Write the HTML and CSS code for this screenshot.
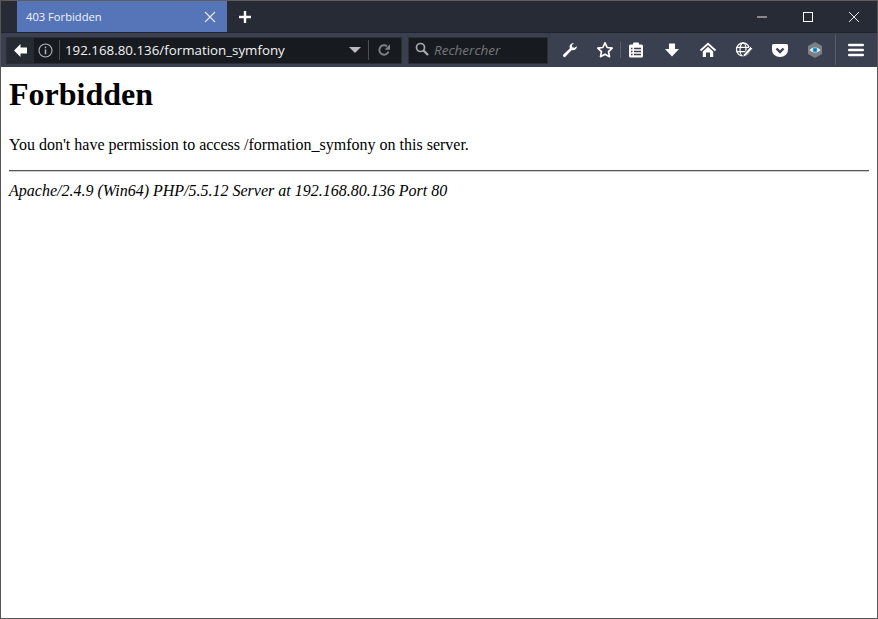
FILE: index.html
```html
<!DOCTYPE html>
<html lang="en">
<head>
  <meta charset="UTF-8" />
  <title>403 Forbidden</title>
  <link rel="stylesheet" href="styles.css">
</head>
<body>
  <div class="window">
    <div class="tabbar">
      <div class="tab">
        <span class="tab-title">403 Forbidden</span>
        <svg class="tab-close" width="12" height="12" viewBox="0 0 12 12"><path d="M1 1l10 10M11 1L1 11" stroke="#e6eaf2" stroke-width="1.1" fill="none"/></svg>
      </div>
      <svg class="new-tab" width="14" height="14" viewBox="0 0 14 14"><path d="M7 1v12M1 7h12" stroke="#fff" stroke-width="2.4" fill="none"/></svg>
      <div class="win-controls">
        <svg width="12" height="12" viewBox="0 0 12 12"><path d="M1 6h10" stroke="#e8e8e8" stroke-width="1" fill="none"/></svg>
        <svg width="12" height="12" viewBox="0 0 12 12"><rect x="1.5" y="1.5" width="9" height="9" stroke="#fff" fill="none"/></svg>
        <svg width="12" height="12" viewBox="0 0 12 12"><path d="M1 1l10 10M11 1L1 11" stroke="#e8e8e8" stroke-width="1" fill="none"/></svg>
      </div>
    </div>

    <div class="navbar">
      <div class="urlbar">
        <div class="back">
          <svg width="15" height="15" viewBox="0 0 15 15"><path d="M7.500 1L1 7.500 7.500 14V10.500H14v-6H7.500z" fill="#fff"/></svg>
        </div>
        <svg class="info" width="15" height="15" viewBox="0 0 15 15"><circle cx="7.500" cy="7.500" r="6.500" stroke="#b4b7bc" stroke-width="1.100" fill="none"/><path d="M7.500 6.500v4.700M7.500 3.600v1.600" stroke="#b4b7bc" stroke-width="1.500" fill="none"/></svg>
        <span class="sep"></span>
        <span class="url">192.168.80.136/formation_symfony</span>
        <span class="dropmark"></span>
        <span class="sep"></span>
        <svg class="reload" width="14" height="14" viewBox="0 0 14 14"><path d="M11.500 8.500A4.700 4.700 0 1 1 10 3.300" stroke="#7d8084" stroke-width="2" fill="none"/><path d="M7.500 6.800h5.500V1.300z" fill="#7d8084"/></svg>
      </div>
      <div class="searchbar">
        <svg class="search-icon" width="14" height="14" viewBox="0 0 14 14"><circle cx="5.500" cy="5.500" r="4" stroke="#a4a7ab" stroke-width="1.700" fill="none"/><path d="M8.500 8.500l4.500 4.500" stroke="#a4a7ab" stroke-width="2.400" fill="none"/></svg>
        <span class="search-text">Rechercher</span>
      </div>
      <div class="tools">
        <svg class="tool tight" viewBox="-1 -1 18 18"><path d="M15 4.200a4 4 0 0 1-5.300 3.800L3.600 14.600a1.400 1.400 0 0 1-2.200-2L7.800 6.400A4 4 0 0 1 12 1l-2.200 2.300.5 2 2 .5z" fill="#fff"/></svg>
        <svg class="tool flush" viewBox="0 0 18 18"><path d="M9 1.800l2.200 4.700 5 .6-3.700 3.500 1 5.100L9 13.200l-4.500 2.500 1-5.100L1.800 7.100l5-.6z" stroke="#fff" stroke-width="1.700" fill="none" stroke-linejoin="round"/></svg>
        <span class="tool-sep"></span>
        <svg class="tool" viewBox="0 0 18 18"><rect x="2" y="3.500" width="14" height="13" rx="1.500" fill="#fff"/><rect x="6" y="1.500" width="6" height="3" rx="1" fill="#fff"/><path d="M4 7.500h1.500M7 7.500h7M4 10.500h1.500M7 10.500h7M4 13.500h1.500M7 13.500h7" stroke="#3a4050" stroke-width="1.300"/></svg>
        <svg class="tool" viewBox="0 0 18 18"><path d="M6 2.500h6V8h4l-7 7.500L2 8h4z" fill="#fff"/></svg>
        <svg class="tool" viewBox="0 0 18 18"><path d="M1.500 9.500L9 2.800l7.500 6.700" stroke="#fff" stroke-width="1.800" fill="none"/><path d="M3.800 10.500L9 5.800l5.200 4.700V16H11v-4.500H7V16H3.800z" fill="#fff"/></svg>
        <svg class="tool" viewBox="0 0 18 18"><circle cx="8" cy="8.500" r="6.500" stroke="#fff" stroke-width="1.300" fill="none"/><ellipse cx="8" cy="8.500" rx="3" ry="6.500" stroke="#fff" stroke-width="1.200" fill="none"/><path d="M1.500 6.300h13M1.500 10.700h13" stroke="#fff" stroke-width="1.200"/><path d="M15.500 5.500l2.200 2.200-7.200 7.500-3 1.100 1-3z" fill="#fff" stroke="#3a4050" stroke-width="1"/></svg>
        <svg class="tool tight" viewBox="0 0 18 18"><path d="M2.500 3h13A1.500 1.500 0 0 1 17 4.500V9A8 7 0 0 1 1 9V4.500A1.500 1.500 0 0 1 2.500 3z" fill="#fff"/><path d="M5.500 7.500L9 11l3.500-3.500" stroke="#3a4050" stroke-width="2.400" fill="none"/></svg>
        <svg class="tool flush" viewBox="0 0 18 18"><path d="M9 1l7 4v8l-7 4-7-4V5z" fill="#7b7f86"/><path d="M3.300 9Q9 3.500 14.700 9 9 14.500 3.300 9z" fill="#e8edf2"/><circle cx="9" cy="9" r="2.400" fill="#2a9bd6"/><circle cx="9" cy="9" r=".9" fill="#15608a"/></svg>
        <span class="tool-sep tall"></span>
        <svg class="tool flush" viewBox="0 0 18 18"><path d="M2.300 4h13.400M2.300 9h13.400M2.300 14h13.400" stroke="#fff" stroke-width="2.700" stroke-linecap="round"/></svg>
      </div>
    </div>

    <main class="page">
      <h1>Forbidden</h1>
      <p>You don't have permission to access /formation_symfony on this server.</p>
      <hr>
      <address>Apache/2.4.9 (Win64) PHP/5.5.12 Server at 192.168.80.136 Port 80</address>
    </main>
  </div>
</body>
</html>
```

FILE: styles.css
```css
html, body {
  margin: 0;
  padding: 0;
  height: 100%;
  overflow: hidden;
}

.window {
  height: 100%;
  box-sizing: border-box;
  border: 1px solid #555;
  border-top: 1px solid #5c5c58;
  display: flex;
  flex-direction: column;
  background: #fff;
}

.tabbar {
  height: 31px;
  background: #272b35;
  display: flex;
  align-items: center;
  padding-left: 16px;
}

.tab {
  width: 210px;
  height: 31px;
  background: #5675b9;
  display: flex;
  align-items: center;
  justify-content: space-between;
  padding: 0 11px 0 9px;
  box-sizing: border-box;
}

.tab-title {
  font: 11.200px "Open Sans", sans-serif;
  color: #f0f3f8;
}

.new-tab {
  margin-left: 11px;
}

.win-controls {
  margin-left: auto;
  display: flex;
  gap: 34px;
  padding-right: 17px;
}

.navbar {
  height: 34px;
  background: #3a4050;
  border-top: 1px solid #20232b;
  display: flex;
  align-items: center;
  padding-left: 5px;
}

.urlbar {
  width: 396px;
  height: 27px;
  background: #171b1f;
  border: 1px solid #2a2e37;
  box-sizing: border-box;
  display: flex;
  align-items: center;
}

.back {
  width: 27px;
  height: 25px;
  background: #252a33;
  display: flex;
  align-items: center;
  justify-content: center;
}

.info {
  margin-left: 4px;
}

.sep {
  width: 1px;
  height: 20px;
  background: #4b4f57;
  margin-left: 6px;
}

.url {
  font: 13.330px "Open Sans", sans-serif;
  color: #f2f3f4;
  margin-left: 5px;
}

.dropmark {
  margin-left: auto;
  border-left: 6px solid transparent;
  border-right: 6px solid transparent;
  border-top: 6px solid #b8babd;
}

.dropmark + .sep {
  margin-left: 7px;
}

.reload {
  margin: 0 10px 0 8px;
}

.searchbar {
  width: 140px;
  height: 27px;
  margin-left: 6px;
  background: #171b1f;
  border: 1px solid #2a2e37;
  box-sizing: border-box;
  display: flex;
  align-items: center;
  padding-left: 6px;
  gap: 5px;
}

.search-icon {
  margin-bottom: 2px;
}

.search-text {
  font: italic 13.500px "Open Sans", sans-serif;
  color: #74777c;
}

.tools {
  flex: 1;
  display: flex;
  align-items: center;
  padding-left: 13px;
}

.tool {
  width: 18px;
  height: 18px;
  margin-right: 18px;
  flex: none;
}

.tool.tight {
  margin-right: 17px;
}

.tool.flush {
  margin-right: 0;
}

.tool-sep {
  width: 1px;
  height: 16px;
  background: #5a5f6c;
  margin: 0 6px;
}

.tool-sep.tall {
  height: 30px;
  margin: 0 11px;
}

.page {
  flex: 1;
  padding: 9px 8px 8px;
  font-family: "Liberation Serif", serif;
  font-size: 16px;
  color: #000;
}

h1 {
  font-size: 32px;
  margin: 0 0 23px;
  line-height: 37px;
}

p {
  margin: 0 0 16px;
  line-height: 18px;
}

hr {
  margin: 0 0 10px;
  border: 0;
  border-top: 1px solid #555;
  border-bottom: 1px solid #ccc;
}

address {
  line-height: 18px;
}
```
